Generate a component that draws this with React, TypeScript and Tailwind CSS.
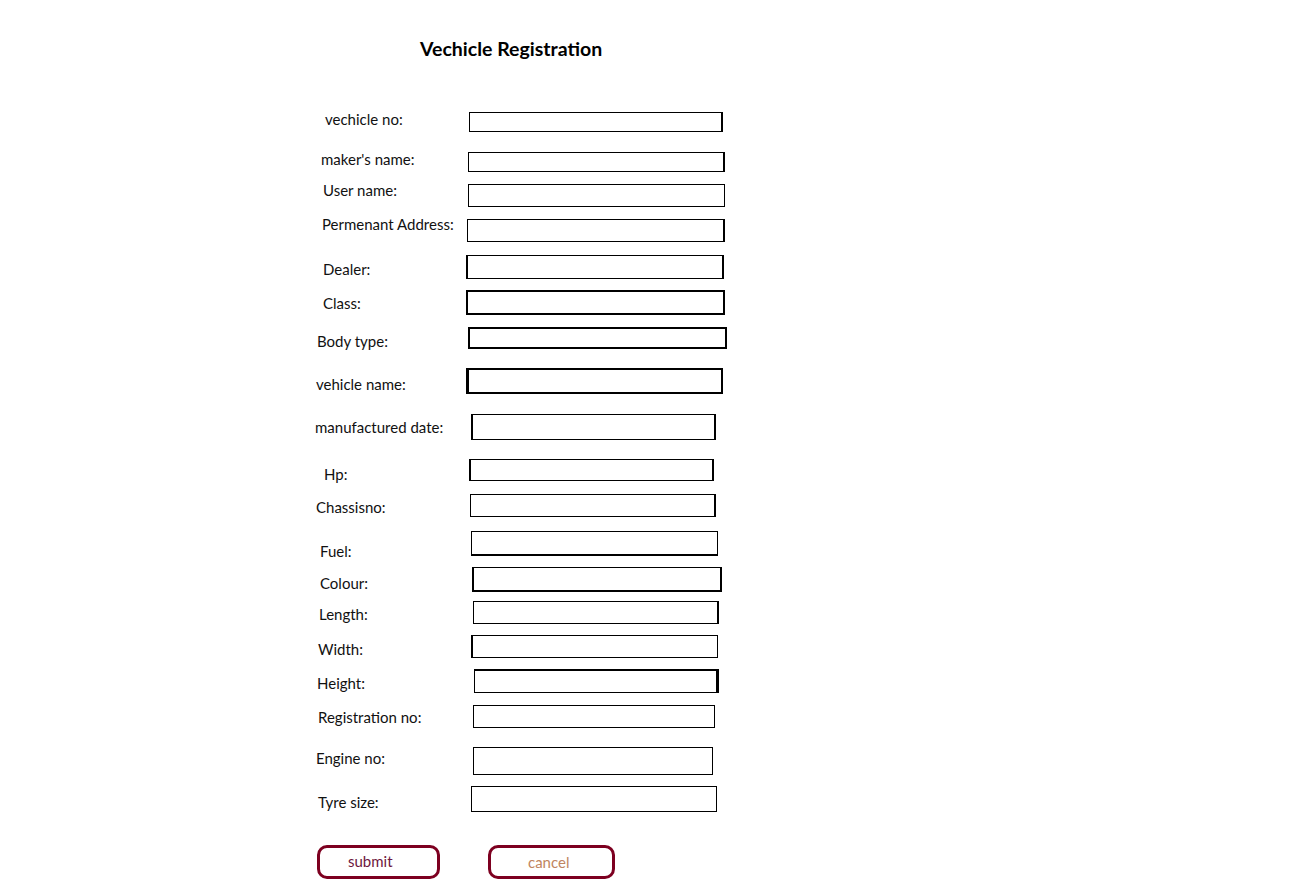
const rows = [
  { label: "vechicle no:", pl: "pl-[25px]", lt: "-mt-[2px]", ml: "ml-[9px]", size: "w-[254px] h-[20px]", rh: "h-[40px]", b: "border border-r-2" },
  { label: "maker's name:", pl: "pl-[21px]", lt: "-mt-[2px]", ml: "ml-[8px]", size: "w-[257px] h-[20px]", rh: "h-[32px]", b: "border border-r-2" },
  { label: "User name:", pl: "pl-[23px]", lt: "-mt-[3px]", ml: "ml-[8px]", size: "w-[257px] h-[23px]", rh: "h-[35px]", b: "border" },
  { label: "Permenant Address:", pl: "pl-[22px]", lt: "-mt-[4px]", ml: "ml-[7px]", size: "w-[258px] h-[23px]", rh: "h-[36px]", b: "border border-r-2" },
  { label: "Dealer:", pl: "pl-[23px]", lt: "mt-[5px]", ml: "ml-[6px]", size: "w-[258px] h-[24px]", rh: "h-[35px]", b: "border-x-2 border-y" },
  { label: "Class:", pl: "pl-[23px]", lt: "mt-[4px]", ml: "ml-[6px]", size: "w-[259px] h-[25px]", rh: "h-[37px]", b: "border-2" },
  { label: "Body type:", pl: "pl-[17px]", lt: "mt-[5px]", ml: "ml-[8px]", size: "w-[259px] h-[22px]", rh: "h-[41px]", b: "border-2" },
  { label: "vehicle name:", pl: "pl-[16px]", lt: "mt-[7px]", ml: "ml-[6px]", size: "w-[257px] h-[26px]", rh: "h-[46px]", b: "border-2 border-l-[3px]" },
  { label: "manufactured date:", pl: "pl-[15px]", lt: "mt-[4px]", ml: "ml-[11px]", size: "w-[245px] h-[26px]", rh: "h-[45px]", b: "border-x-2 border-y" },
  { label: "Hp:", pl: "pl-[24px]", lt: "mt-[6px]", ml: "ml-[9px]", size: "w-[245px] h-[22px]", rh: "h-[35px]", b: "border border-x-2" },
  { label: "Chassisno:", pl: "pl-[16px]", lt: "mt-[4px]", ml: "ml-[10px]", size: "w-[246px] h-[23px]", rh: "h-[37px]", b: "border border-r-2" },
  { label: "Fuel:", pl: "pl-[20px]", lt: "mt-[11px]", ml: "ml-[11px]", size: "w-[247px] h-[25px]", rh: "h-[36px]", b: "border border-b-2" },
  { label: "Colour:", pl: "pl-[20px]", lt: "mt-[7px]", ml: "ml-[12px]", size: "w-[250px] h-[25px]", rh: "h-[34px]", b: "border-2 border-t" },
  { label: "Length:", pl: "pl-[19px]", lt: "mt-[4px]", ml: "ml-[13px]", size: "w-[246px] h-[23px]", rh: "h-[34px]", b: "border border-r-2" },
  { label: "Width:", pl: "pl-[18px]", lt: "mt-[5px]", ml: "ml-[11px]", size: "w-[247px] h-[23px]", rh: "h-[34px]", b: "border border-l-2" },
  { label: "Height:", pl: "pl-[17px]", lt: "mt-[5px]", ml: "ml-[14px]", size: "w-[245px] h-[24px]", rh: "h-[36px]", b: "border border-t-2 border-r-[3px]" },
  { label: "Registration no:", pl: "pl-[18px]", lt: "mt-[3px]", ml: "ml-[13px]", size: "w-[242px] h-[23px]", rh: "h-[42px]", b: "border" },
  { label: "Engine no:", pl: "pl-[16px]", lt: "mt-[2px]", ml: "ml-[13px]", size: "w-[240px] h-[28px]", rh: "h-[39px]", b: "border" },
  { label: "Tyre size:", pl: "pl-[18px]", lt: "mt-[7px]", ml: "ml-[11px]", size: "w-[246px] h-[26px]", rh: "h-[59px]", b: "border" },
];

export default function App() {
  return (
    <div className="min-h-[891px] w-full bg-white font-['Lato',sans-serif] text-[#111]">
      <div className="ml-[300px] w-[440px] pt-[37px]">
        <h1 className="pl-[120px] text-[19.5px] font-bold leading-[24px] text-black">
          Vechicle Registration
        </h1>

        <form className="mt-[51px]" onSubmit={(e) => e.preventDefault()}>
          {rows.map((r) => (
            <div key={r.label} className={`flex items-start ${r.rh}`}>
              <label className={`w-[160px] shrink-0 text-[15px] leading-[18px] ${r.pl} ${r.lt}`}>
                {r.label}
              </label>
              <input
                type="text"
                className={`${r.ml} ${r.size} ${r.b} shrink-0 border-black bg-white outline-none`}
              />
            </div>
          ))}

          <div className="flex items-start">
            <button
              type="submit"
              className="ml-[17px] h-[34px] w-[123px] rounded-[10px] border-[3px] border-[#7d0020] pb-[2px] pl-[28px] text-left text-[15px] text-[#6e1840]"
            >
              submit
            </button>
            <button
              type="button"
              className="ml-[48px] h-[34px] w-[127px] rounded-[10px] border-[3px] border-[#7d0020] pl-[37px] text-left text-[15px] text-[#c08560]"
            >
              cancel
            </button>
          </div>
        </form>
      </div>
    </div>
  );
}
